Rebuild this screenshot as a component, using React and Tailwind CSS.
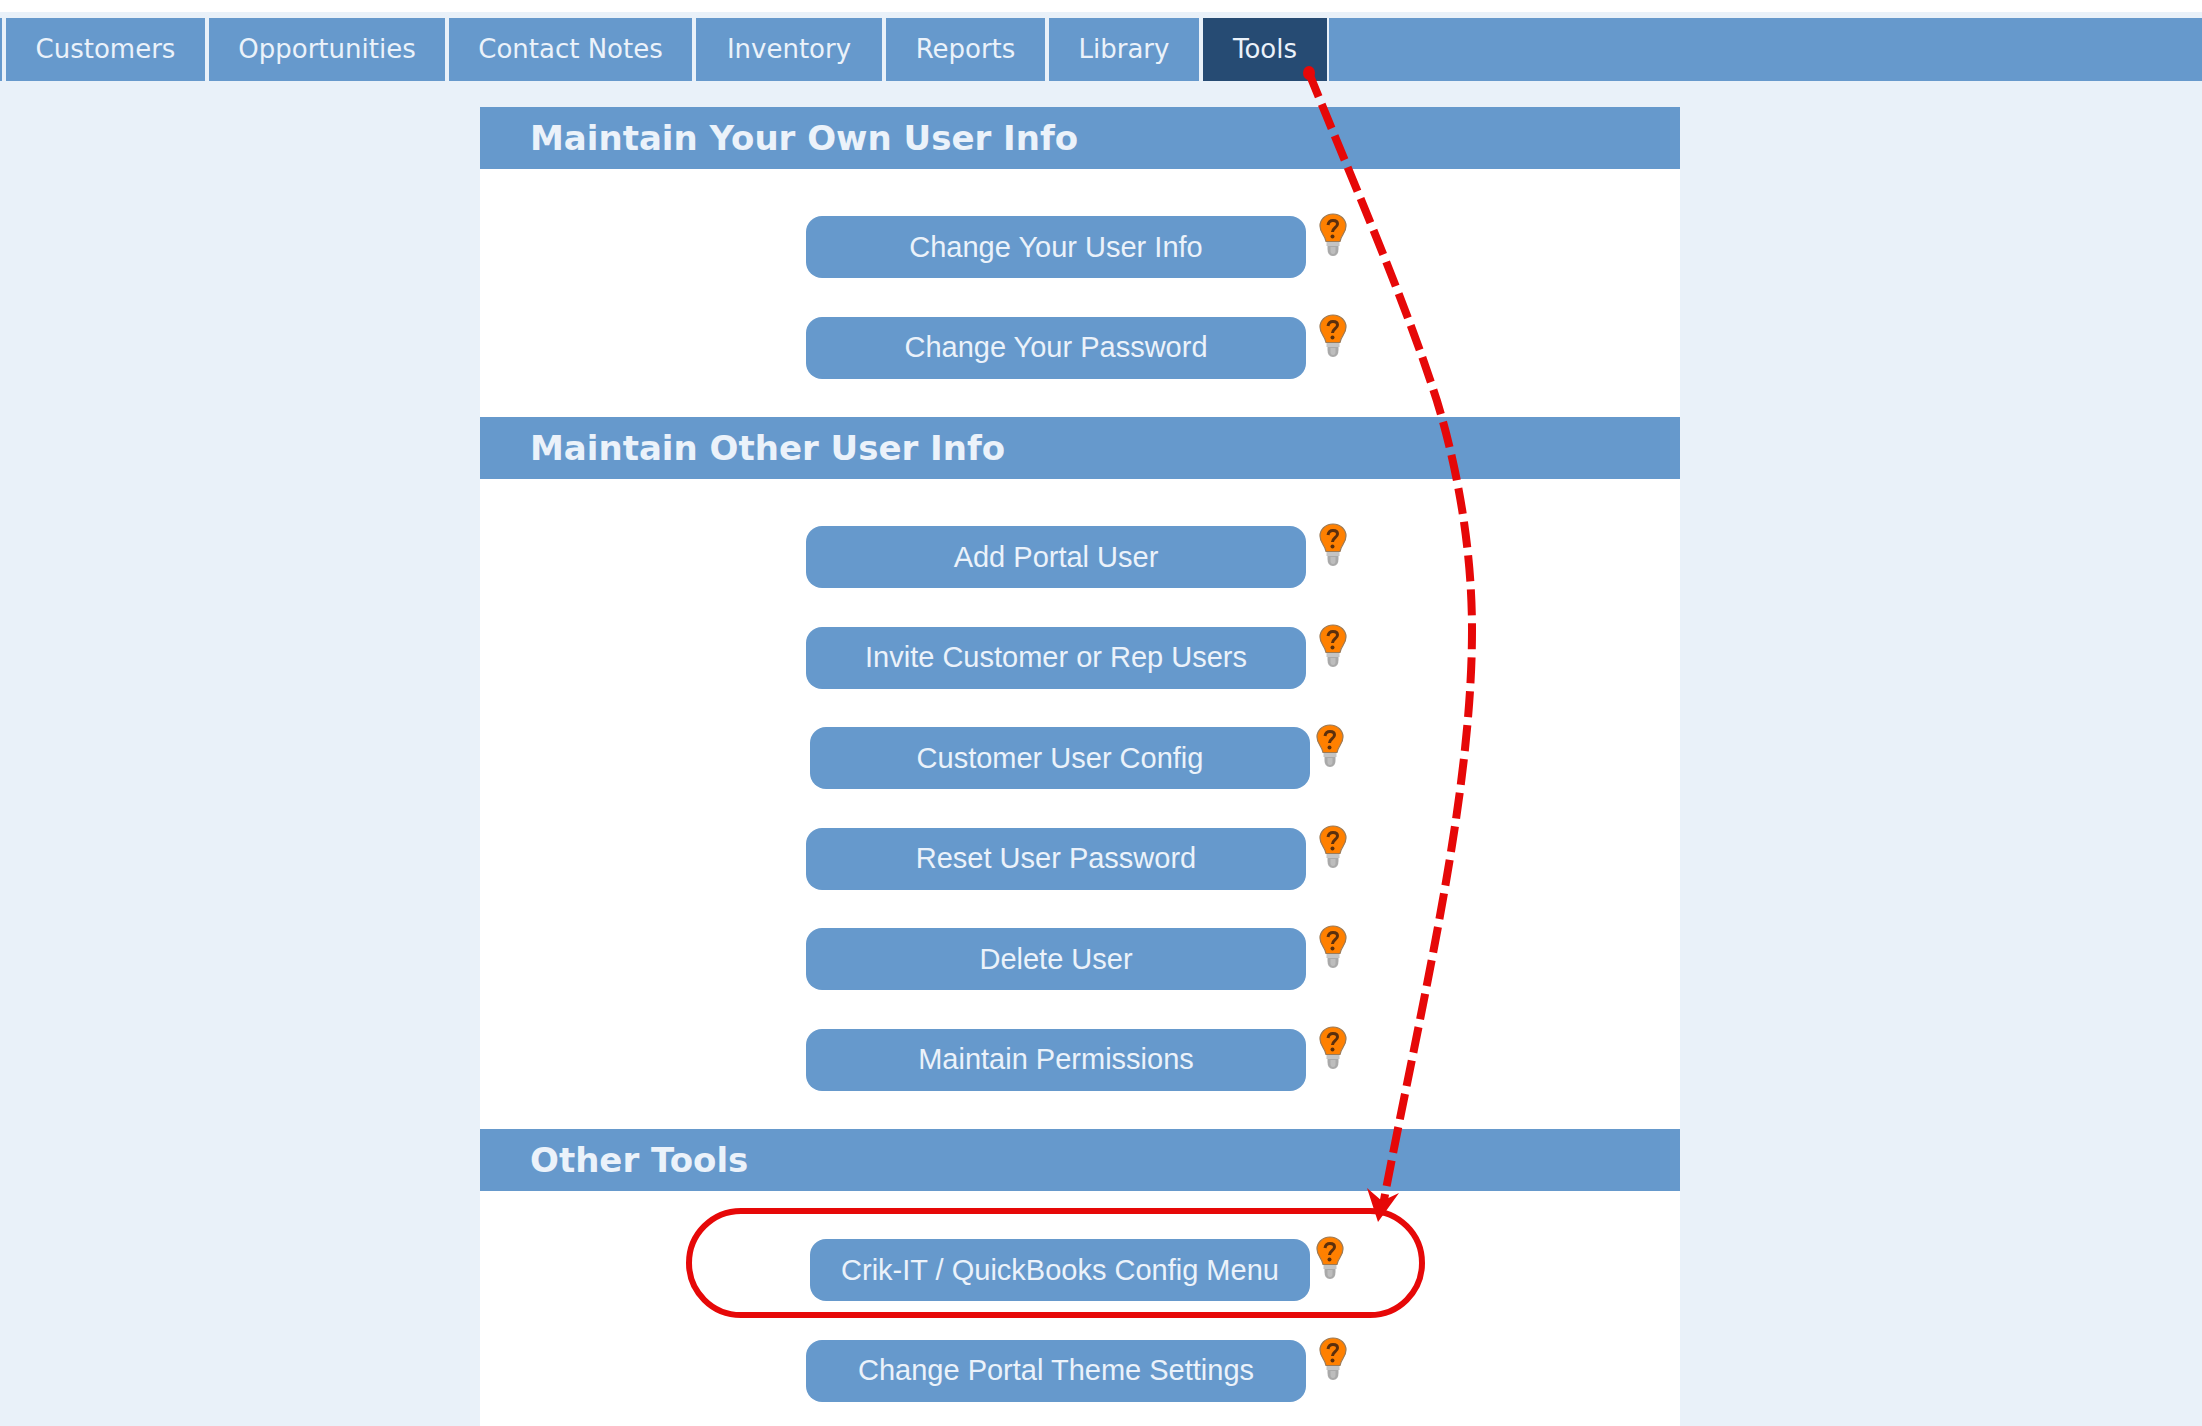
import React from 'react';

const tabs = [
    { label: 'Customers', width: 'w-[199px]' },
    { label: 'Opportunities', width: 'w-[236px]' },
    { label: 'Contact Notes', width: 'w-[243px]' },
    { label: 'Inventory', width: 'w-[186px]' },
    { label: 'Reports', width: 'w-[159px]' },
    { label: 'Library', width: 'w-[150px]' },
    { label: 'Tools', width: 'w-[124px]', active: true },
];

const Bulb = ({ className }) => (
    <svg viewBox="0 0 28 44" className={className}>
        <rect x="7.500" y="28" width="13" height="5" fill="#c4c4c4" />
        <path d="M8.500 33h11v3q0 7-5.500 7t-5.500-7z" fill="#a9a9a9" />
        <path d="M11.500 34v4q0 3 2.500 3t2.500-3v-4z" fill="#bdbdbd" />
        <path
            d="M14 1C6 1 1 7 1 13C1 20 6 22 7 28.500H21C22 22 27 20 27 13C27 7 22 1 14 1Z"
            fill="#ff8000"
            stroke="#9c7a55"
            strokeWidth="1.200"
        />
        <path
            d="M9 12c.5-3 2.500-4.500 5-4.500c2.800 0 4.500 1.500 4.500 3.500c0 3.500-5 4-5 8"
            fill="none"
            stroke="#5b2f0d"
            strokeWidth="3"
        />
        <circle cx="13.500" cy="23.500" r="2" fill="#5b2f0d" />
    </svg>
);

const ToolRow = ({ label, shifted }) => (
    <div className={`flex items-start h-[62px] mb-[38.5px] ${shifted ? 'ml-[330px]' : 'ml-[326px]'}`}>
        <button className="w-[500px] h-[62px] pt-[1px] rounded-[16px] bg-[#6699cc] text-[#ebf2fa] text-[29px] font-[Liberation_Sans,Arial,sans-serif] flex items-center justify-center">
            {label}
        </button>
        <Bulb className={`w-[28px] h-[44px] -mt-[3px] blur-[0.4px] ${shifted ? 'ml-[6px]' : 'ml-[13px]'}`} />
    </div>
);

const SectionHeader = ({ title, spacing }) => (
    <div className={`h-[61.5px] pt-[1px] bg-[#6699cc] flex items-center pl-[50px] ${spacing}`}>
        <h2 className="text-[34px] font-bold text-[#ebf2fa] font-[DejaVu_Sans,sans-serif]">{title}</h2>
    </div>
);

const App = () => {
    return (
        <div className="relative w-[2202px] h-[1426px] overflow-hidden bg-white">
            <div className="mt-[12px] h-[1414px] pt-[6px] bg-[#e9f1f9]">
                <nav className="flex h-[63px] gap-[4px]">
                    <div className="w-[2px] bg-[#6699cc]" />
                    {tabs.map((tab) => (
                        <div
                            key={tab.label}
                            className={`${tab.width} flex items-center justify-center text-[26px] text-[#ebf2fa] font-[DejaVu_Sans,sans-serif] ${tab.active ? 'bg-[#264b73]' : 'bg-[#6699cc]'}`}
                        >
                            {tab.label}
                        </div>
                    ))}
                    <div className="flex-1 -ml-[2px] bg-[#6699cc]" />
                </nav>

                <main className="mt-[26px] ml-[480px] w-[1200px] h-[1319px] bg-white">
                    <SectionHeader title="Maintain Your Own User Info" spacing="mb-[47.5px]" />
                    <ToolRow label="Change Your User Info" />
                    <ToolRow label="Change Your Password" />

                    <SectionHeader title="Maintain Other User Info" spacing="mt-[1.2px] mb-[47.5px]" />
                    <ToolRow label="Add Portal User" />
                    <ToolRow label="Invite Customer or Rep Users" />
                    <ToolRow label="Customer User Config" shifted />
                    <ToolRow label="Reset User Password" />
                    <ToolRow label="Delete User" />
                    <ToolRow label="Maintain Permissions" />

                    <SectionHeader title="Other Tools" spacing="mb-[48.5px]" />
                    <ToolRow label="Crik-IT / QuickBooks Config Menu" shifted />
                    <ToolRow label="Change Portal Theme Settings" />
                </main>
            </div>

            {/* annotation drawn on top of the screenshot */}
            <div className="absolute left-[686px] top-[1208px] w-[739px] h-[110px] rounded-full border-[6px] border-[#e60808]" />
            <svg className="absolute left-0 top-0 w-[2202px] h-[1426px] pointer-events-none" viewBox="0 0 2202 1426">
                <ellipse cx="1309" cy="73" rx="6" ry="7" fill="#e60808" />
                <path
                    d="M1309 73C1350 175 1405 300 1437 401C1458 470 1472 550 1472 630C1472 800 1420 1010 1383 1205"
                    fill="none"
                    stroke="#e60808"
                    strokeWidth="8"
                    strokeDasharray="26 8"
                />
                <polygon points="1378,1222 1367,1188 1382,1201 1399,1193" fill="#e60808" />
            </svg>
        </div>
    );
};

export default App;
